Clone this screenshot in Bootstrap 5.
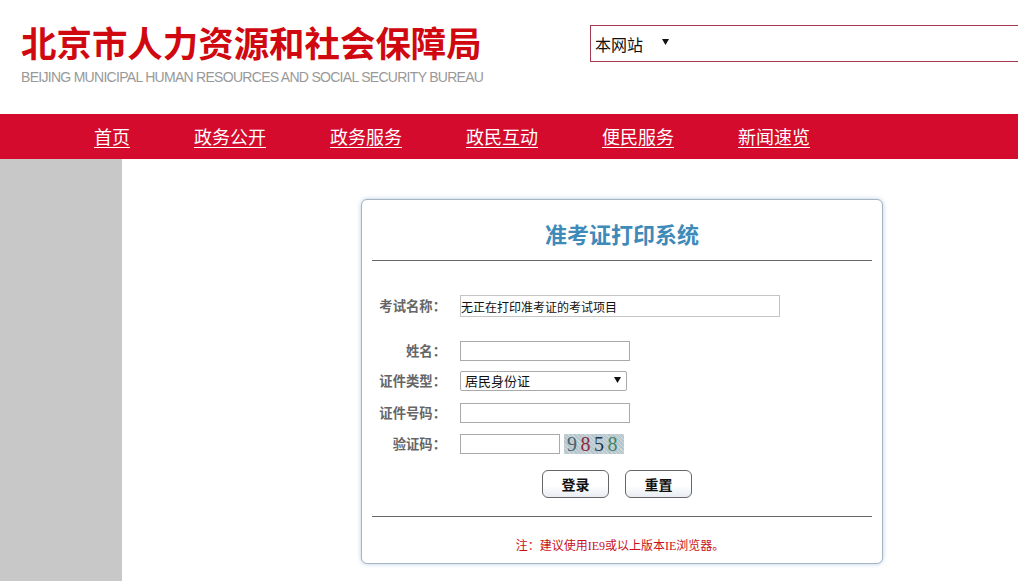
<!DOCTYPE html>
<html lang="zh-CN">
<head>
<meta charset="utf-8">
<title>准考证打印系统</title>
<link rel="stylesheet" href="https://cdn.jsdelivr.net/npm/bootstrap@5.3.0/dist/css/bootstrap.min.css">
<style>
html,body{height:581px;overflow:hidden}
body{font-family:"Liberation Sans","Noto Sans CJK SC",sans-serif;background:#fff;color:#000}
.site-head{height:114px}
.brand-box{width:590px;flex:none;padding:20px 0 0 21px}
.brand-cn{font-family:"Noto Sans CJK SC",sans-serif;font-size:35.45px;font-weight:700;line-height:44px;color:#d0080f;white-space:nowrap;margin:0}
.brand-en{font-size:14px;line-height:16px;color:#999;letter-spacing:-.71px;white-space:nowrap;margin-top:5px}
.search-box{width:428px;height:37px;margin-top:25px;border:1px solid #a33a50;border-right:0;flex:none}
.scope-select{width:88px;height:35px;border:0;background:#fff url("data:image/svg+xml,%3Csvg xmlns='http://www.w3.org/2000/svg' width='7' height='6'%3E%3Cpath d='M0 0h7L3.500 6z' fill='%23111'/%3E%3C/svg%3E") no-repeat 71px 13px;appearance:none;padding:0 0 0 4px;font-size:16px;font-family:"Noto Sans CJK SC",sans-serif;color:#111;outline:0}
.main-nav{height:45px;background:#d40b2c;padding-left:94px;gap:64px}
.main-nav a{font-family:"Noto Sans CJK SC",sans-serif;font-size:18px;color:#fff;text-decoration:underline;text-underline-offset:3px;text-decoration-thickness:1px}
.page-body{height:422px}
.side-strip{width:122px;background:#c8c8c8;flex:none}
.login-panel{width:522px;height:365px;margin:40px 0 0 239px;border:1px solid #a5b3c2;border-radius:6px;box-shadow:0 0 4px rgba(120,165,205,.55);padding:0 10px;flex:none;background:#fff}
.panel-title{font-family:"Noto Sans CJK SC",sans-serif;font-size:22px;font-weight:700;color:#3e8ab8;line-height:30px;margin:18px 0 12px;text-align:center}
.panel-rule{height:1px;background:#666;margin:0;border:0;opacity:1}
.form-line{display:flex;align-items:center}
.form-line label{width:72px;margin-left:2px;text-align:right;font-family:"Noto Sans CJK SC",sans-serif;font-size:13.33px;font-weight:700;color:#666;line-height:18px;flex:none;white-space:nowrap;margin-right:14px}
.mid-colon{font-family:"Noto Sans CJK TC",sans-serif}
.field{height:20px;border:1px solid #aaa;background:#fff;padding:0;font-family:"Noto Sans CJK SC",sans-serif;font-size:12px;color:#111;border-radius:0;outline:0}
.field-wide{width:320px;height:22px;border-color:#c4c4c4}
.field-mid{width:170px}
.field-type{width:167px;height:20px;padding-left:4px;font-size:13px;appearance:none;border-radius:2px;background:#fff url("data:image/svg+xml,%3Csvg xmlns='http://www.w3.org/2000/svg' width='7' height='6'%3E%3Cpath d='M0 0h7L3.500 6z' fill='%23111'/%3E%3C/svg%3E") no-repeat 153px 5px;line-height:18px}
.field-code{width:100px}
.captcha-img{width:60px;height:20px;margin:-1px 0 0 4px;background:repeating-linear-gradient(45deg,#b4c4cc 0 1px,#ccd7da 1px 2px,#bdcbd1 2px 3px);font-family:"Liberation Serif",serif;font-size:20px;line-height:20px;letter-spacing:3.5px;text-align:center;color:#4a6270}
.d-red{color:#8e2a3c}.d-navy{color:#1d3550}.d-green{color:#3f8464}
.act-row{gap:16px;margin:16px 0 18px 170px}
.act-btn{width:67px;height:28px;padding:0;border:1px solid #666;border-radius:6px;background:linear-gradient(#fff 55%,#e8edf2);font-family:"Noto Sans CJK SC",sans-serif;font-size:14px;font-weight:700;color:#111;line-height:26px}
.panel-note{font-family:"Liberation Serif","Noto Sans CJK SC",serif;font-size:12px;line-height:16px;color:#c8101a;text-align:center;margin:20px 0 0 -4px}
.gap-a{margin-top:34px}.gap-b{margin-top:24px}.gap-c{margin-top:11px}.gap-d{margin-top:10px}.gap-e{margin-top:12px}
</style>
</head>
<body>
<header class="site-head d-flex">
  <div class="brand-box">
    <h1 class="brand-cn">北京市人力资源和社会保障局</h1>
    <div class="brand-en">BEIJING MUNICIPAL HUMAN RESOURCES AND SOCIAL SECURITY BUREAU</div>
  </div>
  <form class="search-box d-flex">
    <select class="scope-select" aria-label="搜索范围"><option>本网站</option></select>
  </form>
</header>
<nav class="main-nav d-flex align-items-center">
  <a href="#">首页</a><a href="#">政务公开</a><a href="#">政务服务</a><a href="#">政民互动</a><a href="#">便民服务</a><a href="#">新闻速览</a>
</nav>
<div class="page-body d-flex">
  <aside class="side-strip"></aside>
  <main class="login-panel">
    <h2 class="panel-title">准考证打印系统</h2>
    <hr class="panel-rule">
    <form>
      <div class="form-line gap-a"><label>考试名称<span class="mid-colon">：</span></label><input class="field field-wide" value="无正在打印准考证的考试项目"></div>
      <div class="form-line gap-b"><label>姓名<span class="mid-colon">：</span></label><input class="field field-mid"></div>
      <div class="form-line gap-d"><label>证件类型<span class="mid-colon">：</span></label><select class="field field-type"><option>居民身份证</option></select></div>
      <div class="form-line gap-e"><label>证件号码<span class="mid-colon">：</span></label><input class="field field-mid"></div>
      <div class="form-line gap-c"><label>验证码<span class="mid-colon">：</span></label><input class="field field-code"><div class="captcha-img">9<span class="d-red">8</span><span class="d-navy">5</span><span class="d-green">8</span></div></div>
      <div class="act-row d-flex"><button type="button" class="act-btn">登录</button><button type="button" class="act-btn">重置</button></div>
    </form>
    <hr class="panel-rule">
    <p class="panel-note">注<span class="mid-colon">：</span>建议使用IE9或以上版本IE浏览器。</p>
  </main>
</div>
<script src="https://cdn.jsdelivr.net/npm/bootstrap@5.3.0/dist/js/bootstrap.bundle.min.js"></script>
</body>
</html>
